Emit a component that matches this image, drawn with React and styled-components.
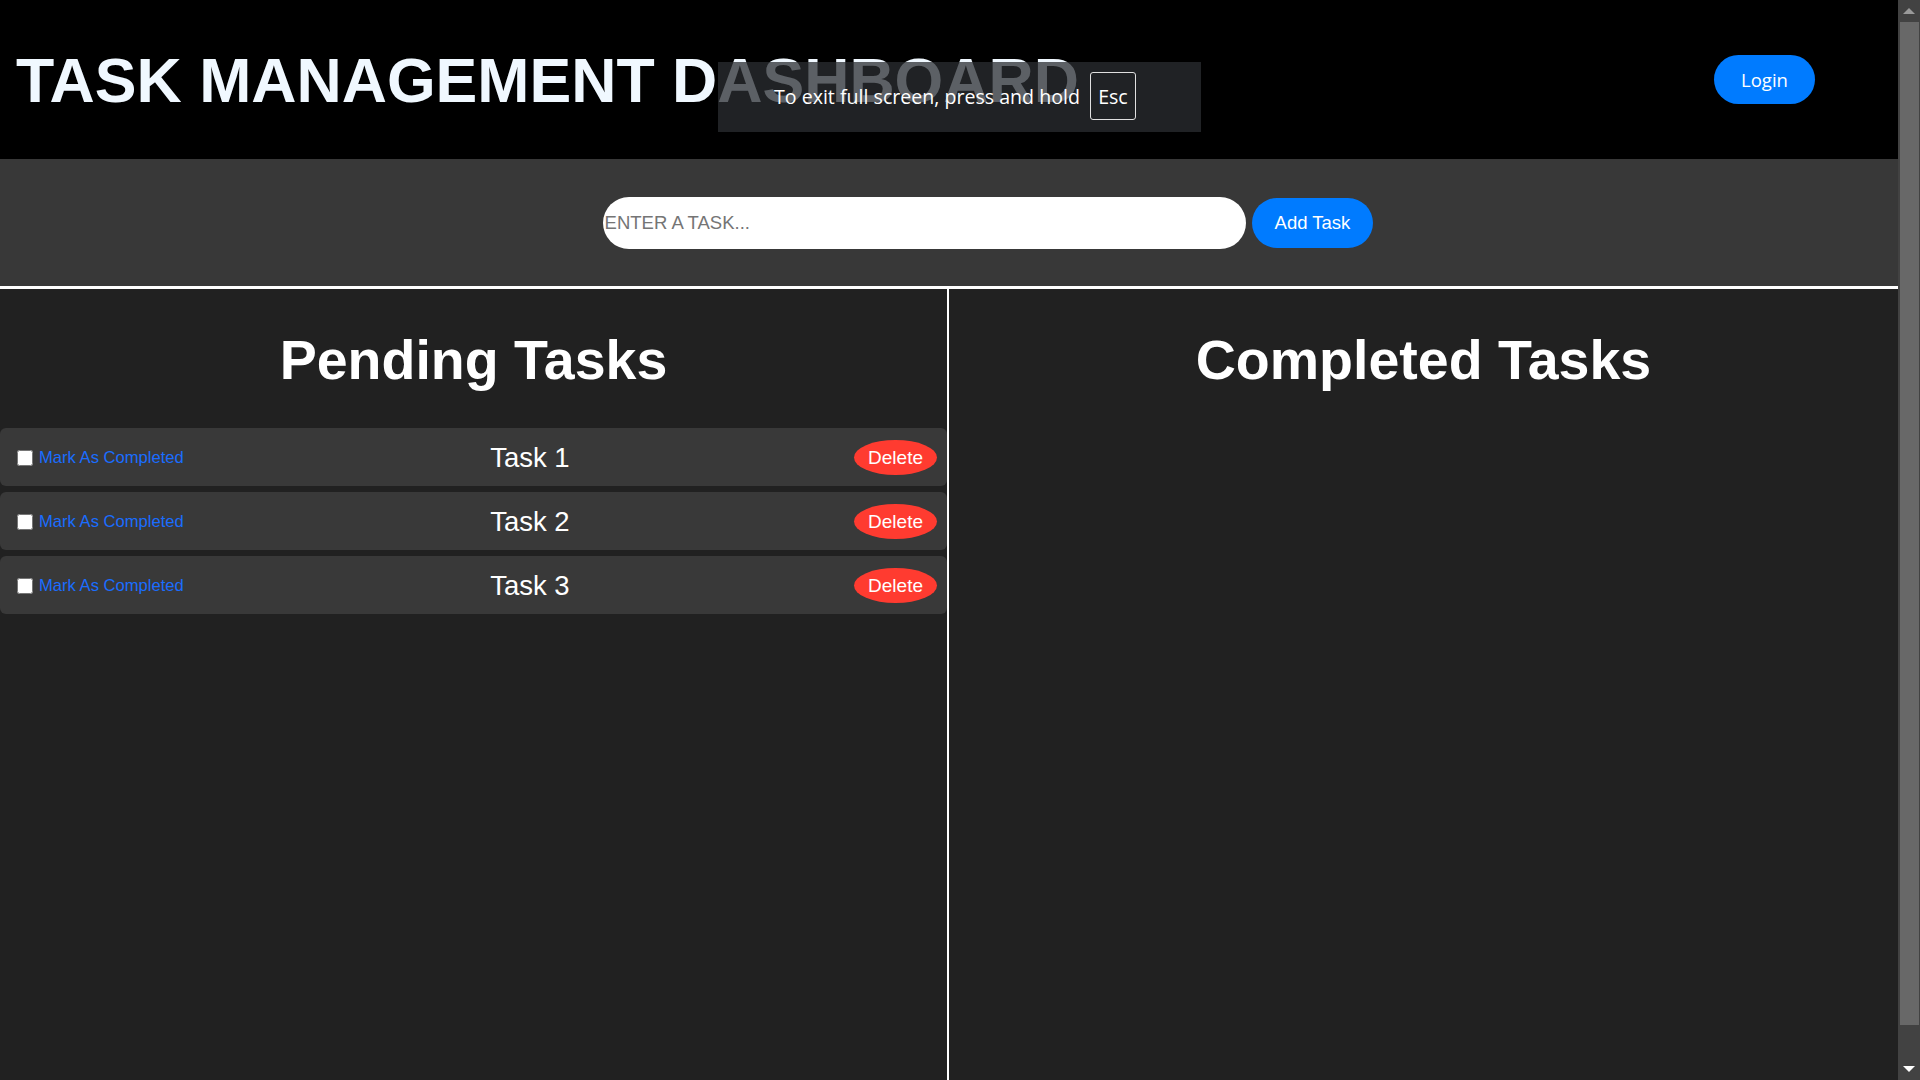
import React from 'react'
import styled, { createGlobalStyle } from 'styled-components'

const GlobalStyle = createGlobalStyle`
html, body {
  margin: 0;
  padding: 0;
}
body {
  background-color: #212121;
  font-family: "Liberation Sans", Arial, sans-serif;
  overflow-x: hidden;
}
`

const Frame = styled.div`
display: flex;
align-items: flex-start;
position: relative;
`

const Page = styled.div`
flex: 1;
min-width: 0;
`

const Header = styled.header`
height: 159px;
background-color: #000;
display: flex;
align-items: center;
justify-content: space-between;
padding: 0 83px 0 16px;
box-sizing: border-box;
`

const Title = styled.h1`
margin: 0;
color: #f0f8ff;
font-size: 62.6px;
font-weight: bold;
font-family: "Liberation Sans", Arial, sans-serif;
`

const LoginButton = styled.button`
width: 101px;
height: 49px;
border: none;
border-radius: 25px;
background-color: #007bff;
color: #fff;
font-family: "Open Sans", "Noto Sans", sans-serif;
font-size: 18.5px;
cursor: pointer;
`

const InputBar = styled.div`
height: 127px;
background-color: #383838;
border-bottom: 3px solid #fff;
display: flex;
align-items: center;
justify-content: center;
gap: 6px;
padding-left: 78px;
`

const TaskInput = styled.input`
width: 643px;
height: 52px;
box-sizing: border-box;
border: none;
border-radius: 26px;
padding: 1px 2px;
font-family: "Liberation Sans", Arial, sans-serif;
font-size: 18.5px;
background-color: #fff;
outline: none;
&::placeholder {
  color: #757575;
}
`

const AddButton = styled.button`
height: 50px;
padding: 0 23px;
border: none;
border-radius: 25px;
background-color: #007bff;
color: #fff;
font-family: "Liberation Sans", Arial, sans-serif;
font-size: 18.5px;
cursor: pointer;
`

const Board = styled.main`
display: grid;
grid-template-columns: 1fr 1fr;
min-height: 861px;
`

const Column = styled.section`
background-color: #212121;
border-right: ${p => (p.$divider ? '2px solid #fff' : 'none')};
`

const ColumnTitle = styled.h2`
margin: 40px 0 37px;
text-align: center;
color: #fff;
font-size: 55.5px;
font-weight: bold;
line-height: 62px;
`

const TaskRow = styled.div`
height: 58px;
margin-bottom: 6px;
background-color: #393939;
border-radius: 6px;
display: flex;
align-items: center;
justify-content: space-between;
padding: 1px 10px 0 17px;
box-sizing: border-box;
`

const CompleteLabel = styled.label`
display: flex;
align-items: center;
color: #1a6dff;
font-size: 16.6px;
cursor: pointer;
`

const Checkbox = styled.input`
width: 16px;
height: 16px;
margin: 0 6px 0 0;
`

const TaskText = styled.span`
color: #fff;
font-size: 27.5px;
margin-left: 22px;
`

const DeleteButton = styled.button`
height: 35px;
padding: 0 14px;
border: none;
border-radius: 50%;
background-color: #ff3b30;
color: #fff;
font-family: "Liberation Sans", Arial, sans-serif;
font-size: 19px;
cursor: pointer;
`

const FullscreenNotice = styled.div`
position: absolute;
left: 718px;
top: 62px;
width: 483px;
height: 70px;
box-sizing: border-box;
padding: 0 0 2px 56px;
background-color: rgba(43, 45, 50, 0.75);
display: flex;
align-items: center;
gap: 10px;
color: #fff;
font-family: "Open Sans", "Noto Sans", sans-serif;
font-size: 19.6px;
`

const Key = styled.span`
display: flex;
align-items: center;
justify-content: center;
width: 46px;
height: 48px;
box-sizing: border-box;
border: 1px solid #e0e0e0;
border-radius: 3px;
`

const ScrollTrack = styled.div`
width: 22px;
height: 1080px;
flex-shrink: 0;
background-color: #424242;
display: flex;
flex-direction: column;
align-items: center;
`

const ScrollArrow = styled.div`
height: 22px;
width: 100%;
display: flex;
align-items: center;
justify-content: center;
&::before {
  content: '';
  width: 0;
  height: 0;
  border-left: 6px solid transparent;
  border-right: 6px solid transparent;
  ${p => (p.$down
    ? 'border-top: 6px solid #fff;'
    : 'border-bottom: 6px solid #9a9a9a;')}
}
`

const ScrollThumb = styled.div`
width: 19px;
height: 1003px;
margin-left: 1px;
background-color: #686868;
`

const ScrollGap = styled.div`
flex: 1;
`

const tasks = ['Task 1', 'Task 2', 'Task 3']

export default function App() {
  return (
    <Frame>
      <GlobalStyle />
      <Page>
        <Header>
          <Title>TASK MANAGEMENT DASHBOARD</Title>
          <LoginButton>Login</LoginButton>
        </Header>
        <InputBar>
          <TaskInput placeholder="ENTER A TASK..." />
          <AddButton>Add Task</AddButton>
        </InputBar>
        <Board>
          <Column $divider>
            <ColumnTitle>Pending Tasks</ColumnTitle>
            {tasks.map(t => (
              <TaskRow key={t}>
                <CompleteLabel>
                  <Checkbox type="checkbox" />
                  Mark As Completed
                </CompleteLabel>
                <TaskText>{t}</TaskText>
                <DeleteButton>Delete</DeleteButton>
              </TaskRow>
            ))}
          </Column>
          <Column>
            <ColumnTitle>Completed Tasks</ColumnTitle>
          </Column>
        </Board>
      </Page>
      <ScrollTrack>
        <ScrollArrow />
        <ScrollThumb />
        <ScrollGap />
        <ScrollArrow $down />
      </ScrollTrack>
      <FullscreenNotice>
        To exit full screen, press and hold <Key>Esc</Key>
      </FullscreenNotice>
    </Frame>
  )
}
